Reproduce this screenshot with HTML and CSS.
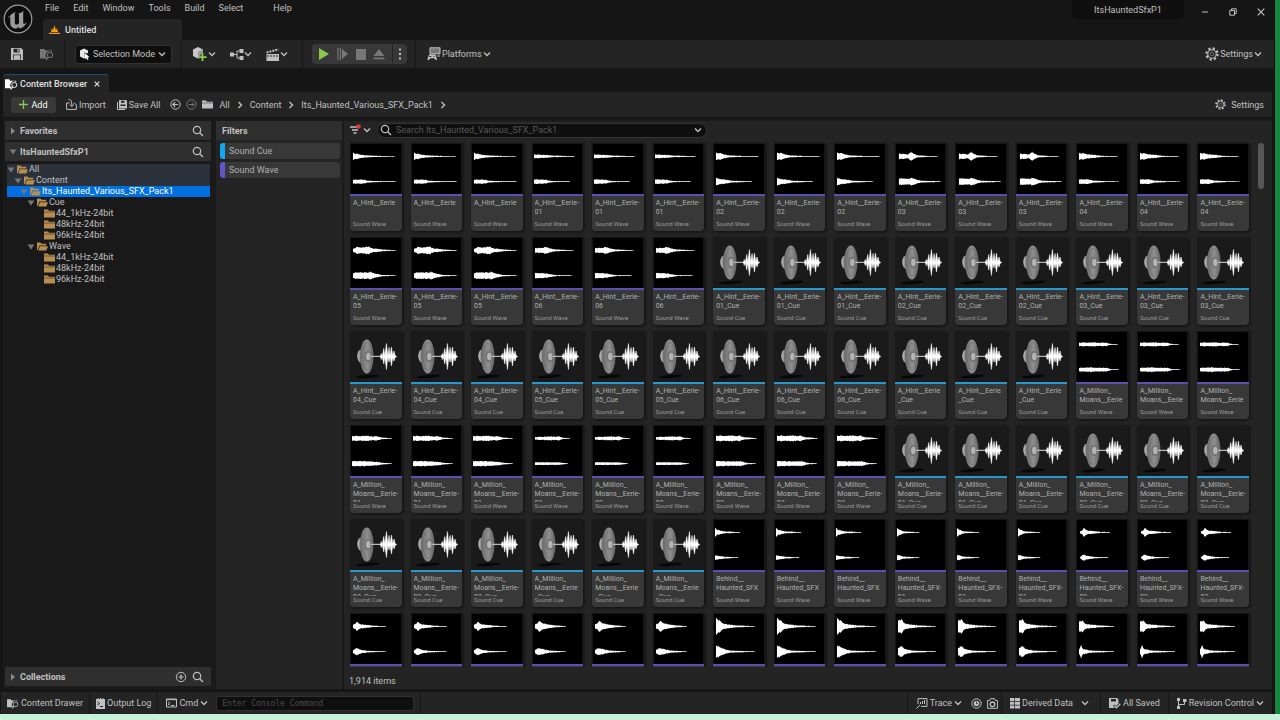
FILE: index.html
```html
<!DOCTYPE html>
<html lang="en">
<head>
    <meta charset="UTF-8">
    <meta name="viewport" content="width=device-width, initial-scale=1.0">
    <title>ItsHauntedSfxP1</title>
    <link rel="stylesheet" href="styles.css">
</head>
<body>
    <!-- Icon sprite -->
    <svg class="sprite" aria-hidden="true">
        <symbol id="chevron" viewBox="0 0 8 8"><path d="M1 2.500 4 5.500 7 2.500" fill="none" stroke="currentColor" stroke-width="1.300"/></symbol>
        <symbol id="arrow" viewBox="0 0 8 8"><path d="M2.500 1 5.500 4 2.500 7" fill="none" stroke="currentColor" stroke-width="1.400"/></symbol>
        <symbol id="search" viewBox="0 0 12 12"><circle cx="5" cy="5" r="3.700" fill="none" stroke="currentColor" stroke-width="1.200"/><path d="m7.700 7.700 3.300 3.300" stroke="currentColor" stroke-width="1.300"/></symbol>
        <symbol id="save" viewBox="0 0 12 12"><path fill="currentColor" fill-rule="evenodd" d="M0 0h10l2 2v10H0zM2.500 .8v3.700h6V.8zM2 6.500v4.700h8V6.500z"/><path fill="currentColor" d="M6.300 1.200h1.400v2.600H6.300zM2.800 7.300h6.400v3.900H2.800z"/></symbol>
        <symbol id="browse" viewBox="0 0 14 12"><path fill="currentColor" d="M0 1h4.500l1 1.500H12v1.300a4 4 0 0 0-4.500 6.700H0z"/><circle cx="10" cy="7" r="2.700" fill="none" stroke="currentColor"/><path d="M8.300 9 6 11.800" stroke="currentColor" stroke-width="1.200"/></symbol>
        <symbol id="folder" viewBox="0 0 11 9"><path fill="currentColor" d="M0 .5h4l1 1.300h6v.9H0zM0 3.300h11v5.200H0z"/></symbol>
        <symbol id="folder-open" viewBox="0 0 11 9"><path fill="currentColor" d="M0 .5h3.500l1 1.200h4.700v1.800H2.400L.8 8H0z"/><path fill="currentColor" d="M2.900 4.200H11L9.300 8.500H1.300z"/></symbol>
        <symbol id="gear" viewBox="0 0 14 14"><circle cx="7" cy="7" r="5.600" fill="none" stroke="currentColor" stroke-width="2.200" stroke-dasharray="2.200 2.198"/><circle cx="7" cy="7" r="4.200" fill="none" stroke="currentColor" stroke-width="1.100"/><circle cx="7" cy="7" r="1.800" fill="none" stroke="currentColor" stroke-width=".8" opacity=".6"/></symbol>
        <symbol id="down" viewBox="0 0 8 6"><path d="M.5.5h7L4 5.500z" fill="#777"/></symbol>
        <symbol id="right" viewBox="0 0 6 8"><path d="M1 .5v7L5 4z" fill="#888"/></symbol>
        <symbol id="cue" viewBox="0 0 51 51">
            <ellipse cx="17" cy="45.500" rx="12" ry="1.500" fill="#070707" transform="rotate(-4 17 45.500)"/>
            <path d="M13 17.500 8.500 19.500q-3 5 0 11l4 3z" fill="url(#magnet)"/>
            <ellipse cx="16.500" cy="25.500" rx="6.800" ry="17" fill="url(#cone)"/>
            <ellipse cx="17" cy="25.500" rx="5.300" ry="14" fill="none" stroke="#6c6c6c" stroke-width=".5"/>
            <ellipse cx="17.500" cy="25.500" rx="3.400" ry="5.800" fill="#747474"/>
            <ellipse cx="18" cy="25.500" rx="2.200" ry="3.800" fill="#b4b4b4"/>
            <path d="M21 25.300h10" stroke="#ddd"/>
            <path d="M30 25.500 31 22.500 32 25.500 33.500 17.500 34.500 25 36.200 12.500 37.500 25 38.800 16.500 39.800 25 41.200 16 42.500 24.500 43.800 20 44.800 24.500 46.500 25.500 44.800 26.500 43.800 30 42.500 26.500 41.200 35 39.800 26 38.800 31 37.500 26 36.200 38.500 34.500 26 33.500 33 32 25.500 31 28.500z" fill="#fff" stroke="#fff" stroke-width=".5"/>
        </symbol>
        <linearGradient id="cone"><stop stop-color="#6c6c6c"/><stop offset=".55" stop-color="#8f8f8f"/><stop offset="1" stop-color="#626262"/></linearGradient>
        <linearGradient id="magnet"><stop stop-color="#c4c4c4"/><stop offset="1" stop-color="#4c4c4c"/></linearGradient>
    </svg>

    <div class="screen">
        <div class="window">
            <header class="titlebar">
                <svg class="logo" viewBox="0 0 30 30">
                    <circle cx="15" cy="15" r="13.800" fill="#0c0c0c" stroke="#9a9a9a" stroke-width="1.200"/>
                    <path fill="#999" d="M5.500 15c1-3.500 3.500-6 7.500-7-1 .9-1.200 1.500-1.200 2.500v8.500c0 1 .8 1.600 1.700 1.600 1 0 2-.6 2.500-1.400V10.500c0-.6-.4-1-1.300-1.100 2.500-.2 4.800-1.200 6.300-3-.2.800-.8 1.600-.8 2.900v9.200c0 .9.400 1.300 1 1.300s1.700-.7 2.800-1.900c-1.400 3.300-4 5.600-7.300 6.700l-1.500-1.500-1.900 1.600c-3.700-.2-6-2.500-6-5.200v-6c0-1-.4-1.400-.9-1.400-.4 0-.7.300-.9 2.900z"/>
                </svg>
                <div class="title-left">
                    <nav class="menu">
                        <button>File</button>
                        <button>Edit</button>
                        <button>Window</button>
                        <button>Tools</button>
                        <button>Build</button>
                        <button>Select</button>
                        <button class="menu-help">Help</button>
                    </nav>
                    <div class="level-tab">
                        <svg width="11" height="9" viewBox="0 0 11 9"><path fill="#f39b13" d="m2 7 1-4 1 2L5.500.3 7 5l1-2 1 4zM0 7.700h11V9H0z"/></svg>
                        <span>Untitled</span>
                    </div>
                </div>
                <div class="project">ItsHauntedSfxP1</div>
                <div class="window-buttons">
                    <button aria-label="Minimize"><svg width="8" height="8" viewBox="0 0 8 8"><path d="M1 4h6" stroke="currentColor"/></svg></button>
                    <button aria-label="Restore"><svg width="8" height="8" viewBox="0 0 8 8"><path d="M.8 2.500h4.700v4.700H.8zM2.500 2.500V.8h4.700v4.700H5.500" fill="none" stroke="currentColor"/></svg></button>
                    <button aria-label="Close"><svg width="8" height="8" viewBox="0 0 8 8"><path d="m.7.7 6.600 6.600m0-6.600L.7 7.300" stroke="currentColor" stroke-width="1.200"/></svg></button>
                </div>
            </header>

            <div class="toolbar">
                <div class="tools tools-file">
                    <button aria-label="Save"><svg width="12" height="12"><use href="#save"/></svg></button>
                    <button class="dim" aria-label="Browse"><svg width="14" height="12"><use href="#browse"/></svg></button>
                </div>
                <div class="tools tools-mode">
                    <button class="mode">
                        <svg width="11" height="12" viewBox="0 0 11 12"><path fill="#e8e8e8" d="M1 2.500 5 .5l4 2v3L5.500 4.500 6 10 5 10.500 1 8.500z"/><path fill="#fff" d="m6 5 4.500 4.300-2 .2 1 2-1.200.5-1-2L6 11.300z"/></svg>
                        Selection Mode
                        <svg width="8" height="8"><use href="#chevron"/></svg>
                    </button>
                </div>
                <div class="tools tools-add">
                    <button aria-label="Add actor">
                        <svg width="16" height="14" viewBox="0 0 16 14"><path fill="#c8c8c8" d="M1 2.500 6 0l5 2.500v4H8.500v2h-1V11L6 11.500 1 9z"/><path fill="#999" d="m6 4.500 5-2v4H8.500v2h-1V11L6 11.500z"/><path d="M10.500 6.500v7.500M7 10.200h7.500" stroke="#8bd04a" stroke-width="1.800"/></svg>
                        <svg width="8" height="8"><use href="#chevron"/></svg>
                    </button>
                    <button aria-label="Blueprints">
                        <svg width="14" height="11" viewBox="0 0 14 11"><path fill="currentColor" d="M0 3.500h4v4H0zM9.500 0h4v4h-4zM9.500 7h4v4h-4z"/><path d="M4 5.500h3M9.500 2H7v7h2.500" fill="none" stroke="currentColor"/></svg>
                        <svg width="8" height="8"><use href="#chevron"/></svg>
                    </button>
                    <button aria-label="Cinematics">
                        <svg width="14" height="13" viewBox="0 0 14 13"><path fill="currentColor" d="M.5 6H13v7H.5z"/><path d="m.5 4.500 12-3" stroke="currentColor" stroke-width="2" stroke-dasharray="2 1"/><path d="M1 8h12" stroke="#242424" stroke-dasharray="2 1"/></svg>
                        <svg width="8" height="8"><use href="#chevron"/></svg>
                    </button>
                </div>
                <div class="tools tools-play">
                    <div class="play">
                        <button aria-label="Play"><svg width="12" height="12" viewBox="0 0 12 12"><path d="M1 0v12l10-6z" fill="#8cc84b"/></svg></button>
                        <button class="dim" aria-label="Skip"><svg width="12" height="12" viewBox="0 0 12 12"><path d="M1 0v12M3.500 0v12" stroke="currentColor" stroke-width="1.200"/><path d="M5 1v10l6-5z" fill="currentColor"/></svg></button>
                        <button class="dim" aria-label="Stop"><svg width="10" height="12" viewBox="0 0 10 12"><path d="M0 1h10v11H0z" fill="currentColor"/></svg></button>
                        <button class="dim" aria-label="Eject"><svg width="12" height="12" viewBox="0 0 12 12"><path d="M6 1 .5 8h11zM.5 9.500h11v1.700H.5z" fill="currentColor"/></svg></button>
                        <button class="more" aria-label="More"><svg width="4" height="12" viewBox="0 0 4 12"><path d="M1 .5h2v2H1zM1 5h2v2H1zM1 9.500h2v2H1z" fill="currentColor"/></svg></button>
                    </div>
                </div>
                <div class="tools tools-platforms">
                    <button>
                        <svg width="14" height="14" viewBox="0 0 14 14"><path d="M3 .8h10v6H3z" fill="#777" stroke="currentColor"/><path fill="currentColor" d="M10 8.500h3v1h-3zM2 7.500h6.500l1.500 5-1 .8-2-2H3.500l-2 2-1.200-.8z"/><path d="M2.300 9.500h2M6.500 9.500h1" stroke="#242424"/></svg>
                        Platforms
                        <svg width="8" height="8"><use href="#chevron"/></svg>
                    </button>
                </div>
                <button class="toolbar-settings">
                    <svg width="14" height="14"><use href="#gear"/></svg>
                    Settings
                    <svg width="8" height="8"><use href="#chevron"/></svg>
                </button>
            </div>

            <main class="browser">
                <div class="browser-tab">
                    <svg class="bright" width="13" height="12"><use href="#browse"/></svg>
                    <span>Content Browser</span>
                    <button aria-label="Close tab"><svg width="6" height="6" viewBox="0 0 6 6"><path d="m.7.7 4.600 4.600m0-4.600L.7 5.300" stroke="currentColor" stroke-width="1.200"/></svg></button>
                </div>
                <div class="pathbar">
                    <button class="add"><svg width="9" height="9" viewBox="0 0 9 9"><path d="M4.500 0v9M0 4.500h9" stroke="#8cc84b" stroke-width="1.300"/></svg>Add</button>
                    <button class="import"><svg width="11" height="11" viewBox="0 0 11 11"><path d="M3.500 4H.6v6.400h9.800V6L8.500 4H7.800M2.500.6c3 0 3.300 1.500 3.300 6.500M3.700 5.500l2.100 2 2.100-2" fill="none" stroke="currentColor"/></svg>Import</button>
                    <button class="save-all"><svg width="10" height="10" viewBox="0 0 10 10"><path d="M.5 2v7.500H8" fill="none" stroke="currentColor"/><path fill="currentColor" fill-rule="evenodd" d="M2 0h7l1 1v7.500H2zM4 .8v2h3.500v-2zM3.500 4.500V6h5V4.500z"/></svg>Save All</button>
                    <button aria-label="Back"><svg width="11" height="11" viewBox="0 0 11 11"><circle cx="5.500" cy="5.500" r="4.700" fill="none" stroke="currentColor"/><path d="M8.300 5.500H3m2.200-2.300L2.900 5.500l2.300 2.300" fill="none" stroke="currentColor" stroke-width="1.200"/></svg></button>
                    <button class="dim" aria-label="Forward"><svg width="11" height="11" viewBox="0 0 11 11"><circle cx="5.500" cy="5.500" r="4.700" fill="none" stroke="currentColor"/><path d="M2.700 5.500H8M5.800 3.200l2.300 2.300-2.300 2.300" fill="none" stroke="currentColor"/></svg></button>
                    <nav class="crumbs">
                        <svg width="11" height="9"><use href="#folder"/></svg>
                        <a href="#">All</a>
                        <svg width="8" height="8"><use href="#arrow"/></svg>
                        <a href="#">Content</a>
                        <svg width="8" height="8"><use href="#arrow"/></svg>
                        <a href="#">Its_Haunted_Various_SFX_Pack1</a>
                        <svg width="8" height="8"><use href="#arrow"/></svg>
                    </nav>
                    <button class="path-settings"><svg width="11" height="11"><use href="#gear"/></svg>Settings</button>
                </div>

                <div class="panels">
                    <aside class="sources">
                        <div class="section">
                            <svg width="6" height="8"><use href="#right"/></svg>
                            <h2>Favorites</h2>
                            <button aria-label="Search favorites"><svg width="12" height="12"><use href="#search"/></svg></button>
                        </div>
                        <div class="section">
                            <svg width="8" height="6"><use href="#down"/></svg>
                            <h2>ItsHauntedSfxP1</h2>
                            <button aria-label="Search project"><svg width="12" height="12"><use href="#search"/></svg></button>
                        </div>
                        <ul class="tree" id="tree"></ul>
                        <div class="section">
                            <svg width="6" height="8"><use href="#right"/></svg>
                            <h2>Collections</h2>
                            <button aria-label="Add collection"><svg width="12" height="12" viewBox="0 0 12 12"><circle cx="6" cy="6" r="4.700" fill="none" stroke="currentColor"/><path d="M6 3.500v5M3.500 6h5" stroke="currentColor" stroke-width="1.200"/></svg></button>
                            <button aria-label="Search collections"><svg width="12" height="12"><use href="#search"/></svg></button>
                        </div>
                    </aside>

                    <aside class="filters">
                        <h2>Filters</h2>
                        <button class="filter filter-cue">Sound Cue</button>
                        <button class="filter filter-wave">Sound Wave</button>
                    </aside>

                    <section class="assets">
                        <div class="search-row">
                            <button aria-label="Filter">
                                <svg width="12" height="12" viewBox="0 0 12 12"><path d="M0 3h9M2 6h6M3.500 9h3" stroke="currentColor" stroke-width="1.300"/><circle cx="8.500" cy="2.500" r="2.300" fill="#e5393f"/></svg>
                                <svg width="8" height="8"><use href="#chevron"/></svg>
                            </button>
                            <label class="search">
                                <svg width="12" height="12"><use href="#search"/></svg>
                                <input type="text" aria-label="Search assets" placeholder="Search Its_Haunted_Various_SFX_Pack1">
                                <svg width="8" height="8"><use href="#chevron"/></svg>
                            </label>
                        </div>
                        <div class="grid-area">
                            <div class="grid" id="grid"></div>
                            <div class="scrollbar"></div>
                        </div>
                        <div class="count">1,914 items</div>
                    </section>
                </div>
            </main>

            <footer class="statusbar">
                <button><svg width="12" height="11" viewBox="0 0 14 12"><use href="#browse"/></svg>Content Drawer</button>
                <button><svg width="9" height="11" viewBox="0 0 9 11"><path fill="currentColor" d="M0 1h1.500V0h1v1h1.500V0h1v1h1.500V0h1v1H9v10H0z"/><path d="m1.500 4 2 1.500-2 1.500M4 8.500h3" fill="none" stroke="#242424"/></svg>Output Log</button>
                <div class="console">
                    <button><svg width="11" height="10" viewBox="0 0 11 10"><path d="M.5 1h10v8H.5zM.5 1.700h10M2 4l2 1.500L2 7M5 7.500h3.500" fill="none" stroke="currentColor"/></svg>Cmd<svg width="8" height="8"><use href="#chevron"/></svg></button>
                    <input type="text" aria-label="Console command" placeholder="Enter Console Command">
                </div>
                <div class="status-right">
                    <div class="trace">
                        <button><svg width="12" height="11" viewBox="0 0 12 11"><path d="M2 6V.6h9v7.800H5M.5 10.500 4 6.800M4.500 6V4M6.500 6V3M8.500 6V2" fill="none" stroke="currentColor"/></svg>Trace<svg width="8" height="8"><use href="#chevron"/></svg></button>
                        <button aria-label="Record"><svg width="11" height="11" viewBox="0 0 11 11"><circle cx="5.500" cy="5.500" r="4.700" fill="none" stroke="currentColor"/><circle cx="5.500" cy="5.500" r="2.800" fill="currentColor"/><path d="M5.500 3.500v2.200H7" fill="none" stroke="#242424" stroke-width=".8"/></svg></button>
                        <button aria-label="Snapshot"><svg width="11" height="11" viewBox="0 0 11 11"><path d="M.6 2.500h2L3.500.7h4l1 1.800h1.900v7.800H.6z" fill="none" stroke="currentColor"/><circle cx="5.500" cy="6.300" r="2.300" fill="none" stroke="currentColor" stroke-width="1.300"/></svg></button>
                    </div>
                    <button class="derived"><svg width="10" height="11" viewBox="0 0 10 11"><path fill="currentColor" d="M0 0h10v3H0zM0 3.800h10v3H0zM0 7.600h10v3H0z"/><path d="M4.500 0v11" stroke="#242424" stroke-width=".7"/></svg>Derived Data<svg width="8" height="8"><use href="#chevron"/></svg></button>
                    <button><svg width="12" height="11" viewBox="0 0 12 11"><path fill="currentColor" fill-rule="evenodd" d="M0 0h8l1.500 1.500v4L7 8 5.500 6.500 4 8l2 2H0zM2 1v2.500h5V1z"/><path d="m5.500 7.800 2 2 3.800-4" fill="none" stroke="currentColor" stroke-width="1.300"/></svg>All Saved</button>
                    <button><svg width="10" height="11" viewBox="0 0 10 11"><path fill="currentColor" d="M0 0h3v3H0zM0 8h3v3H0zM6 1h3.500v3H6z"/><path d="M1.500 2v7M1.500 6.500h6V4" fill="none" stroke="currentColor"/></svg>Revision Control<svg width="8" height="8"><use href="#chevron"/></svg></button>
                </div>
            </footer>
        </div>
        <div class="desktop-right"></div>
        <div class="desktop-bottom"></div>
    </div>

    <script src="app.js"></script>
</body>
</html>
```

FILE: styles.css
```css
* {
    box-sizing: border-box;
}
body {
    margin: 0;
    background-color: #151515;
    color: #c0c0c0;
    font-family: Roboto, "Liberation Sans", sans-serif;
    font-size: 9px;
    line-height: 12px;
}
button, input {
    font: inherit;
    color: inherit;
    background: none;
    border: 0;
    padding: 0;
    margin: 0;
}
button {
    display: flex;
    align-items: center;
    white-space: nowrap;
}
svg {
    display: block;
    flex: none;
}
h2 {
    margin: 0;
    font-size: 9px;
    font-weight: 700;
}
a {
    color: inherit;
    text-decoration: none;
}
.sprite {
    position: absolute;
    width: 0;
    height: 0;
}
.dim {
    color: #777;
}
.bright {
    color: #fff;
}

.screen {
    display: grid;
    grid-template-columns: minmax(0, 1fr) 5px;
    grid-template-rows: minmax(0, 1fr) 6px;
    height: 100vh;
}
.desktop-right {
    background-color: #148a40;
}
.desktop-bottom {
    grid-column: 1 / 3;
    background-color: #c9f2da;
}
.window {
    display: flex;
    flex-direction: column;
    min-height: 0;
    border-right: 1px solid #0a0a0a;
}

/* Title bar */
.titlebar {
    display: flex;
    height: 40px;
}
.logo {
    width: 30px;
    height: 30px;
    margin: 4px 10px 0 3px;
}
.title-left {
    flex: 1;
    display: flex;
    flex-direction: column;
    justify-content: space-between;
}
.menu {
    display: flex;
    gap: 14px;
    padding: 2px;
}
.menu-help {
    margin-left: 16px;
}
.level-tab {
    display: flex;
    align-items: center;
    gap: 5px;
    width: 139px;
    height: 21px;
    padding-left: 6px;
    background-color: #242424;
    border-radius: 3px 3px 0 0;
    color: #ddd;
    font-weight: 500;
}
.project {
    width: 112px;
    height: 19px;
    padding-top: 4px;
    background-color: #0f0f0f;
    border-radius: 0 0 4px 4px;
    text-align: center;
}
.window-buttons {
    display: flex;
    align-items: center;
    gap: 20px;
    height: 24px;
    margin-left: 17px;
    padding-right: 9px;
}

/* Main toolbar */
.toolbar {
    display: flex;
    height: 28px;
    background-color: #242424;
}
.tools {
    display: flex;
    align-items: center;
    border-right: 1px solid #171717;
}
.tools-file {
    gap: 17px;
    padding: 0 10px 0 11px;
}
.tools-mode {
    padding: 0 9px 0 10px;
}
.mode {
    gap: 3px;
    width: 97px;
    height: 19px;
    padding-left: 3px;
    background-color: #0f0f0f;
    border: 1px solid #303030;
    border-radius: 3px;
}
.tools-add {
    gap: 14px;
    padding: 0 14px 0 10px;
}
.tools-play {
    padding: 0 8px 0 9px;
}
.play {
    display: flex;
    height: 20px;
    padding-left: 6px;
    gap: 7px;
    background-color: #383838;
    border-radius: 4px;
}
.more {
    padding: 0 5px;
    border-left: 1px solid #242424;
}
.tools-platforms {
    padding-left: 11px;
    border-right: 0;
}
.tools-platforms button, .toolbar-settings {
    gap: 1px;
}
.toolbar-settings {
    margin: 0 12px 0 auto;
}

/* Content browser */
.browser {
    flex: 1;
    display: flex;
    flex-direction: column;
    min-height: 0;
    margin: 6px 2px 3px 3px;
}
.browser-tab {
    display: flex;
    align-items: center;
    gap: 2px;
    width: 106px;
    height: 18px;
    padding-left: 2px;
    background-color: #242424;
    border-top: 1px solid #1c4a7d;
    border-radius: 3px 3px 0 0;
    color: #e0e0e0;
    font-weight: 500;
}
.browser-tab button {
    margin-left: 5px;
}
.pathbar {
    display: flex;
    align-items: center;
    height: 25px;
    padding: 0 8px;
    background-color: #242424;
}
.pathbar > button {
    gap: 2px;
    margin-right: 5px;
}
.pathbar > .add {
    justify-content: center;
    gap: 3px;
    width: 45px;
    height: 16px;
    background-color: #383838;
    border-radius: 3px;
    color: #fff;
    margin-right: 10px;
}
.pathbar > .import {
    margin-right: 11px;
}
.pathbar > .save-all {
    margin-right: 10px;
}
.crumbs {
    display: flex;
    align-items: center;
    gap: 6px;
}
.pathbar > .path-settings {
    gap: 5px;
    margin: 0 0 0 auto;
}
.panels {
    flex: 1;
    display: flex;
    gap: 2px;
    min-height: 0;
    padding: 3px 0 0 2px;
    border-top: 1px solid #151515;
    background-color: #1a1a1a;
}

.sources {
    display: flex;
    flex-direction: column;
    gap: 2px;
    width: 206px;
    margin-right: 3px;
    padding-bottom: 3px;
}
.section {
    display: flex;
    align-items: center;
    gap: 3px;
    height: 19px;
    padding: 0 7px 0 4px;
    background-color: #2f2f2f;
}
.section > svg {
    width: 8px;
}
.section h2 {
    flex: 1;
}
.section button + button {
    margin-left: 2px;
}
.tree {
    flex: 1;
    min-height: 0;
    margin: 0;
    padding: 1px 1px 0 2px;
    list-style: none;
    background-color: #191919;
}
.tree a {
    display: flex;
    align-items: center;
    height: 11px;
    line-height: 11px;
}
.tree .twisty {
    width: 8px;
    height: 6px;
    margin-right: 2px;
}
.tree .folder {
    margin-right: 1px;
    color: #b88d50;
}
.level-0 { padding-left: 0; }
.level-1 { padding-left: 7px; }
.level-2 { padding-left: 13px; }
.level-3 { padding-left: 20px; }
.level-4 { padding-left: 27px; }
.tree .parent {
    background-color: #2a313b;
}
.tree .selected {
    background-color: #0070e0;
    color: #fff;
}

.filters {
    display: flex;
    flex-direction: column;
    gap: 3px;
    width: 126px;
    background-color: #242424;
}
.filters h2 {
    height: 19px;
    padding: 4px 6px;
    background-color: #2f2f2f;
}
.filter {
    height: 16px;
    margin: 0 2px 0 4px;
    padding-left: 4px;
    background-color: #383838;
    border-left: 5px solid;
    border-radius: 3px;
    color: #b0b0b0;
}
.filter-cue {
    border-left-color: #13a7ee;
}
.filter-wave {
    border-left-color: #6554c8;
}

.assets {
    flex: 1;
    display: flex;
    flex-direction: column;
    min-width: 0;
    background-color: #242424;
}
.search-row {
    display: flex;
    align-items: center;
    gap: 6px;
    height: 18px;
    padding: 0 6px;
}
.search-row button {
    gap: 1px;
}
.search {
    display: flex;
    align-items: center;
    width: 330px;
    height: 15px;
    padding: 0 4px 0 2px;
    gap: 4px;
    background-color: #0f0f0f;
    border: 1px solid #343434;
    border-radius: 8px;
}
.search input {
    flex: 1;
}
input {
    min-width: 0;
    outline: 0;
}
input::placeholder {
    color: #575757;
}
.grid-area {
    flex: 1;
    display: flex;
    gap: 9px;
    min-height: 0;
    padding: 4px 8px 0 6px;
    overflow: hidden;
}
.grid {
    flex: 1;
    display: grid;
    grid-template-columns: repeat(15, minmax(0, 1fr));
    align-content: start;
    gap: 6px 9px;
}
.scrollbar {
    width: 6px;
    height: 46px;
    background-color: #575757;
    border-radius: 3px;
}
.count {
    height: 22px;
    padding: 8px 5px 0;
}

/* Asset cards */
.card {
    height: 88px;
    background-color: #383838;
    border-radius: 2px 2px 4px 4px;
    box-shadow: 1px 1px 2px 1px #181818;
    overflow: hidden;
}
.thumb {
    width: 100%;
    height: 51px;
    background-color: #1a1a1a;
}
.card-wave .thumb {
    background-color: #000;
    border: 1px solid #161616;
    border-bottom: 0;
}
.info {
    padding: 3px;
    border-top: 2px solid #5b4fb0;
}
.card-cue .info {
    border-top-color: #2798cc;
}
.name {
    height: 21px;
    overflow: hidden;
    white-space: pre;
    font-size: 7px;
    line-height: 9px;
    color: #b0b0b0;
}
.type {
    font-size: 6px;
    line-height: 7px;
    color: #999;
}

/* Status bar */
.statusbar {
    display: flex;
    height: 22px;
    margin: 0 2px 0 1px;
    background-color: #242424;
}
.statusbar button {
    gap: 2px;
}
.statusbar > button, .console, .trace, .status-right > button {
    padding: 0 6px;
    border-right: 1px solid #171717;
}
.console {
    display: flex;
    align-items: center;
    gap: 8px;
    padding: 0 6px 0 8px;
}
.console input {
    width: 198px;
    height: 15px;
    padding: 0 5px;
    background-color: #0f0f0f;
    border: 1px solid #303030;
    border-radius: 3px;
    font: 8px/12px "DejaVu Sans Mono", monospace;
}
.console input::placeholder {
    color: #4a4a4a;
}
.status-right {
    display: flex;
    margin-left: auto;
    border-left: 1px solid #171717;
}
.trace {
    display: flex;
    gap: 5px;
    padding: 0 3px 0 8px;
}
.trace button:first-child {
    margin-right: 4px;
}
.status-right > button {
    padding: 0 8px;
}
.status-right > .derived svg:last-child {
    margin: 0 3px 0 6px;
}
.status-right > button:last-child {
    border-right: 0;
}
```

FILE: app.js
```js
// Folder tree: level, name, open, extra class
const folders = [
    [0, "All", true, "parent"],
    [1, "Content", true, "parent"],
    [2, "Its_Haunted_Various_SFX_Pack1", true, "selected"],
    [3, "Cue", true, ""],
    [4, "44_1kHz-24bit", false, ""],
    [4, "48kHz-24bit", false, ""],
    [4, "96kHz-24bit", false, ""],
    [3, "Wave", true, ""],
    [4, "44_1kHz-24bit", false, ""],
    [4, "48kHz-24bit", false, ""],
    [4, "96kHz-24bit", false, ""]
];

document.getElementById("tree").innerHTML = folders.map(([level, name, open, extra]) => `
    <li><a href="#" class="level-${level} ${extra}">
        ${open ? '<svg class="twisty"><use href="#down"/></svg>' : '<span class="twisty"></span>'}
        <svg class="folder" width="11" height="9"><use href="#${open ? "folder-open" : "folder"}"/></svg>
        <span>${name}</span>
    </a></li>`).join("");

// Envelopes of the left and right channel: [x, half height]
const waves = {
    hint: [[[2, 4], [4, 3], [9, 2.2], [14, 1.3], [20, .9], [28, .6], [38, .3], [45, .3]], [[2, 2.2], [13, 2.2], [16, 1.2], [24, .7], [46, .3]]],
    hint1: [[[1, 2], [10, 1.8], [18, 1.1], [30, .6], [43, .3]], [[1, 2.5], [12, 2.2], [18, 1], [22, .6], [38, .3]]],
    hint2: [[[2, 4], [8, 3], [12, 2], [16, 1], [30, .5], [46, .3]], [[2, 4.5], [5, 3], [12, 2.2], [18, 1], [39, .3]]],
    hint3: [[[3, 3], [8, 2.5], [13, 2.5], [15, 5], [19, 2.5], [22, 1.2], [32, .5], [43, .3]], [[3, 3.5], [8, 3.5], [11, 3], [18, 4], [22, 2], [26, 1], [46, .4]]],
    hint4: [[[2, 3.5], [8, 3], [14, 2], [22, 1.2], [26, .6], [42, .3]], [[2, 2.5], [12, 2.5], [16, 1.2], [30, .5], [43, .2]]],
    hint5: [[[2, 1.5], [6, 3.5], [12, 3.5], [18, 4], [22, 2.5], [30, 1.2], [36, .7], [46, .3]], [[2, 2.5], [5, 3.5], [18, 3.5], [20, 4.5], [24, 2.5], [32, .8], [46, .3]]],
    hint6: [[[2, 2.5], [8, 2.5], [13, 4], [18, 2], [24, 1], [32, .6], [42, .2]], [[2, 3], [12, 2.5], [20, 1.2], [24, .6], [40, .3]]],
    moan: [[[2, 1.8], [12, 2.2], [30, 1.8], [34, .6], [42, .3]], [[2, 2], [12, 2.4], [31, 2], [34, .7], [43, .3]]],
    moan1: [[[1, 2.5], [14, 2.8], [27, 2.2], [32, .8], [42, .3]], [[1, 2.8], [20, 2.6], [28, 1.8], [34, .8], [42, .3]]],
    moan2: [[[2, 1.3], [12, 2], [27, 2.1], [30, .8], [38, .3]], [[2, 1.5], [26, 1.4], [32, .8], [36, .3]]],
    moan3: [[[2, 2.8], [12, 3], [26, 3], [31, 1.2], [44, .3]], [[2, 3], [12, 2.5], [28, 2.6], [34, .8], [43, .3]]],
    behind: [[[1, 5], [3, 3], [6, 2], [12, 1], [27, .3]], [[1, 2.8], [4, 2], [10, 1.1], [25, .3]]],
    behind1: [[[1, 4.5], [3, 3.5], [6, 1.5], [12, .8], [24, .3]], [[1, 3], [4, 2.5], [7, 1.2], [24, .3]]],
    behind2: [[[3, .8], [5, 2], [7, 4.5], [9, 3], [12, 2], [18, 1.3], [24, .7], [34, .3]], [[3, .6], [7, 3.5], [10, 2], [18, .8], [32, .3]]],
    low: [[[2, 1.5], [6, 4.5], [10, 2.5], [16, 1.5], [24, .8], [36, .2]], [[2, 1.5], [6, 4], [10, 2], [16, 1], [36, .2]]],
    low1: [[[2, 2], [7, 5.5], [10, 3.8], [16, 2], [24, 1], [34, .2]], [[2, 2], [6, 3.8], [10, 2.8], [16, 1.4], [34, .2]]],
    hit: [[[2, 9], [5, 7], [8, 4], [14, 2.2], [24, 1], [42, .3]], [[2, 7], [6, 5], [10, 3], [16, 1.2], [42, .3]]],
    hit1: [[[2, 6], [5, 8], [8, 4], [14, 2.2], [24, 1], [41, .3]], [[2, 4], [6, 6], [9, 3], [16, 1.2], [41, .3]]],
    hit2: [[[2, 5], [5, 6.5], [8, 3.2], [14, 2], [24, 1], [38, .3]], [[2, 2], [4, 7], [6, 3], [14, 1.2], [38, .3]]]
};

function channel(points, middle, seed) {
    const top = [];
    const bottom = [];
    const end = points[points.length - 1][0];
    for (let x = points[0][0], i = 0; x < end; x += .7) {
        while (points[i + 1][0] < x) i++;
        const [x0, a0] = points[i];
        const [x1, a1] = points[i + 1];
        seed = (seed * 73 + 41) % 997;
        const amp = (a0 + (a1 - a0) * (x - x0) / (x1 - x0)) * (.7 + .4 * seed / 997);
        top.push(`${x.toFixed(1)} ${(middle - amp).toFixed(1)}`);
        bottom.unshift(`${x.toFixed(1)} ${(middle + amp).toFixed(1)}`);
    }
    return `M${top.concat(bottom).join("L")}zM${points[0][0]} ${middle - .2}H${end}v.5H${points[0][0]}z`;
}

function thumb(wave) {
    if (!wave) {
        return '<svg class="thumb"><use href="#cue"/></svg>';
    }
    const [left, right] = waves[wave];
    return `<svg class="thumb" viewBox="0 0 51 51"><path fill="#fff" d="${channel(left, 12.5, 17)}${channel(right, 38.5, 91)}"/></svg>`;
}

// Assets in display order: count, name, waveform (none for a cue)
const assets = [
    [3, "A_Hint__Eerie", "hint"],
    [3, "A_Hint__Eerie-\n01", "hint1"],
    [3, "A_Hint__Eerie-\n02", "hint2"],
    [3, "A_Hint__Eerie-\n03", "hint3"],
    [3, "A_Hint__Eerie-\n04", "hint4"],
    [3, "A_Hint__Eerie-\n05", "hint5"],
    [3, "A_Hint__Eerie-\n06", "hint6"],
    [3, "A_Hint__Eerie-\n01_Cue"],
    [3, "A_Hint__Eerie-\n02_Cue"],
    [3, "A_Hint__Eerie-\n03_Cue"],
    [3, "A_Hint__Eerie-\n04_Cue"],
    [3, "A_Hint__Eerie-\n05_Cue"],
    [3, "A_Hint__Eerie-\n06_Cue"],
    [3, "A_Hint__Eerie\n_Cue"],
    [3, "A_Million_\nMoans__Eerie", "moan"],
    [3, "A_Million_\nMoans__Eerie-\n01", "moan1"],
    [3, "A_Million_\nMoans__Eerie-\n02", "moan2"],
    [3, "A_Million_\nMoans__Eerie-\n03", "moan3"],
    [3, "A_Million_\nMoans__Eerie-\n01_Cue"],
    [3, "A_Million_\nMoans__Eerie-\n02_Cue"],
    [3, "A_Million_\nMoans__Eerie-\n03_Cue"],
    [3, "A_Million_\nMoans__Eerie\n_Cue"],
    [3, "Behind__\nHaunted_SFX", "behind"],
    [3, "Behind__\nHaunted_SFX-\n01", "behind1"],
    [3, "Behind__\nHaunted_SFX-\n02", "behind2"],
    [3, "Behind__\nHaunted_SFX-\n03", "low"],
    [3, "Behind__\nHaunted_SFX-\n04", "low1"],
    [3, "Behind__\nHaunted_SFX-\n05", "hit"],
    [3, "Behind__\nHaunted_SFX-\n06", "hit1"],
    [3, "Behind__\nHaunted_SFX-\n07", "hit2"]
];

document.getElementById("grid").innerHTML = assets.map(([count, name, wave]) => `
    <div class="card ${wave ? "card-wave" : "card-cue"}">
        ${thumb(wave)}
        <div class="info">
            <div class="name">${name}</div>
            <div class="type">${wave ? "Sound Wave" : "Sound Cue"}</div>
        </div>
    </div>`.repeat(count)).join("");
```
